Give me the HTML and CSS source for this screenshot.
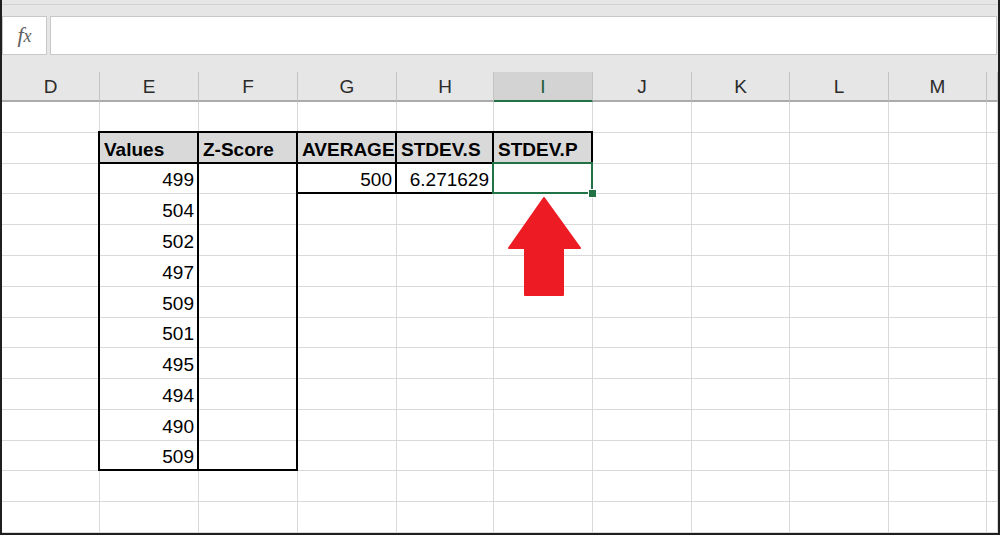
FILE: index.html
```html
<!DOCTYPE html>
<html lang="en">

<head>
    <meta charset="UTF-8">
    <title>Z-Score</title>
    <link rel="stylesheet" href="styles.css">
</head>

<body>
    <div id="window">
        <div id="ribbon-edge"></div>

        <div id="formula-bar">
            <div class="fx-box"><span class="fx">f<span class="fx-x">x</span></span></div>
            <div class="formula-input"></div>
        </div>

        <div id="col-heads" class="sheet-cols"></div>

        <div id="sheet" class="sheet-cols">
            <svg class="arrow" width="74" height="100" viewBox="0 0 74 100">
                <path d="M36 1 L72 51 L55 51 L55 98 L17 98 L17 51 L1 51 Z" fill="#ed1c24" stroke="#ed1c24"
                    stroke-width="2" stroke-linejoin="round" />
            </svg>
        </div>
    </div>

    <script>
        var letters = ['D', 'E', 'F', 'G', 'H', 'I', 'J', 'K', 'L', 'M', ''];
        var values = [499, 504, 502, 497, 509, 501, 495, 494, 490, 509];
        var heads = { E: 'Values', F: 'Z-Score', G: 'AVERAGE', H: 'STDEV.S', I: 'STDEV.P' };
        var selected = 'I3';

        // which border a cell gets: full box, or only the column sides
        function borderType(col, row) {
            if (row === 2 && heads[col]) return 'boxed';
            if ((col === 'G' || col === 'H') && row === 3) return 'boxed';
            if ((col === 'E' || col === 'F') && row >= 3 && row <= 12) {
                return row === 12 ? 'sides last' : 'sides';
            }
            return '';
        }

        function cellText(col, row) {
            if (row === 2 && heads[col]) return heads[col];
            if (col === 'E' && row >= 3 && row <= 12) return values[row - 3];
            if (row === 3 && col === 'G') return 500;
            if (row === 3 && col === 'H') return '6.271629';
            return '';
        }

        var colHeads = document.querySelector('#col-heads');
        letters.forEach(function (l) {
            var h = document.createElement('div');
            h.className = 'col-head';
            if (l === selected.charAt(0)) h.classList.add('active');
            h.textContent = l;
            colHeads.appendChild(h);
        });

        var sheet = document.querySelector('#sheet');
        var arrow = document.querySelector('.arrow');
        for (var row = 1; row <= 14; row++) {
            letters.forEach(function (col) {
                var c = document.createElement('div');
                var text = cellText(col, row);
                var border = borderType(col, row);
                c.className = 'cell';
                if (row === 2 && heads[col]) c.classList.add('head');
                else if (text !== '') c.classList.add('num');
                if (border) c.className += ' ' + border;
                if (col + row === selected) c.classList.add('selected');
                c.textContent = text;
                sheet.insertBefore(c, arrow);
            });
        }
    </script>
</body>

</html>
```

FILE: styles.css
```css
html,
body {
    margin: 0;
    height: 100%;
}

body {
    font-family: "Liberation Sans", Arial, sans-serif;
    background-color: #fff;
}

#window {
    width: 1000px;
    height: 535px;
    box-sizing: border-box;
    border: 2px solid #1f1f1f;
    border-top: none;
    background-color: #e6e6e6;
    display: flex;
    flex-direction: column;
    overflow: hidden;
}

#ribbon-edge {
    height: 4px;
    border-bottom: 1px solid #d2d2d2;
}

#formula-bar {
    display: flex;
    gap: 3px;
    height: 39px;
    padding-top: 11px;
    margin-bottom: 17px;
}

.fx-box {
    width: 45px;
    box-sizing: border-box;
    background-color: #fff;
    border: 1px solid #c8c8c8;
    display: flex;
    align-items: center;
    justify-content: center;
}

.fx {
    font-family: "Liberation Serif", serif;
    font-style: italic;
    font-size: 22px;
    color: #616161;
    margin-bottom: 2px;
}

.fx-x {
    font-size: 18px;
}

.formula-input {
    flex: 1;
    background-color: #fff;
    border: 1px solid #c8c8c8;
    margin-right: 1px;
}

.sheet-cols {
    display: grid;
    grid-template-columns: 98px 99px 99px 99px 97px 99px 99px 98px 99px 98px 1fr;
}

#col-heads {
    height: 30px;
}

.col-head {
    box-sizing: border-box;
    border-right: 1px solid #c4c4c4;
    border-bottom: 2px solid #ababab;
    display: flex;
    align-items: flex-end;
    justify-content: center;
    padding-bottom: 4px;
    font-size: 19px;
    line-height: 1;
    color: #2b2b2b;
}

.col-head.active {
    background-color: #d3d3d3;
    border-bottom-color: #217346;
    color: #1d5c38;
}

#sheet {
    flex: 1;
    grid-template-rows: repeat(14, 1fr);
    background-color: #fff;
    position: relative;
}

.cell {
    min-width: 0;
    border-right: 1px solid #d9d9d9;
    border-bottom: 1px solid #d9d9d9;
    display: flex;
    align-items: flex-end;
    padding: 0 4px 4px;
    font-size: 19px;
    line-height: 1;
    color: #000;
    white-space: nowrap;
}

.cell.num {
    justify-content: flex-end;
}

.cell.head {
    background-color: #d9d9d9;
    font-weight: bold;
}

.cell.boxed,
.cell.sides,
.cell.selected {
    position: relative;
}

.cell.boxed::after,
.cell.sides::after,
.cell.selected::after {
    content: "";
    position: absolute;
    left: -2px;
    top: -2px;
    right: -1px;
    bottom: -1px;
    border: 2px solid #000;
}

.cell.sides::after {
    border-top: none;
    border-bottom: none;
}

.cell.sides.last::after {
    border-bottom: 2px solid #000;
}

.cell.selected::after {
    border-color: #217346;
}

/* fill handle */
.cell.selected::before {
    content: "";
    position: absolute;
    right: -5px;
    bottom: -5px;
    width: 9px;
    height: 9px;
    box-sizing: border-box;
    background-color: #217346;
    border: 1px solid #fff;
    z-index: 1;
}

.arrow {
    position: absolute;
    left: 506px;
    top: 95px;
}
```
